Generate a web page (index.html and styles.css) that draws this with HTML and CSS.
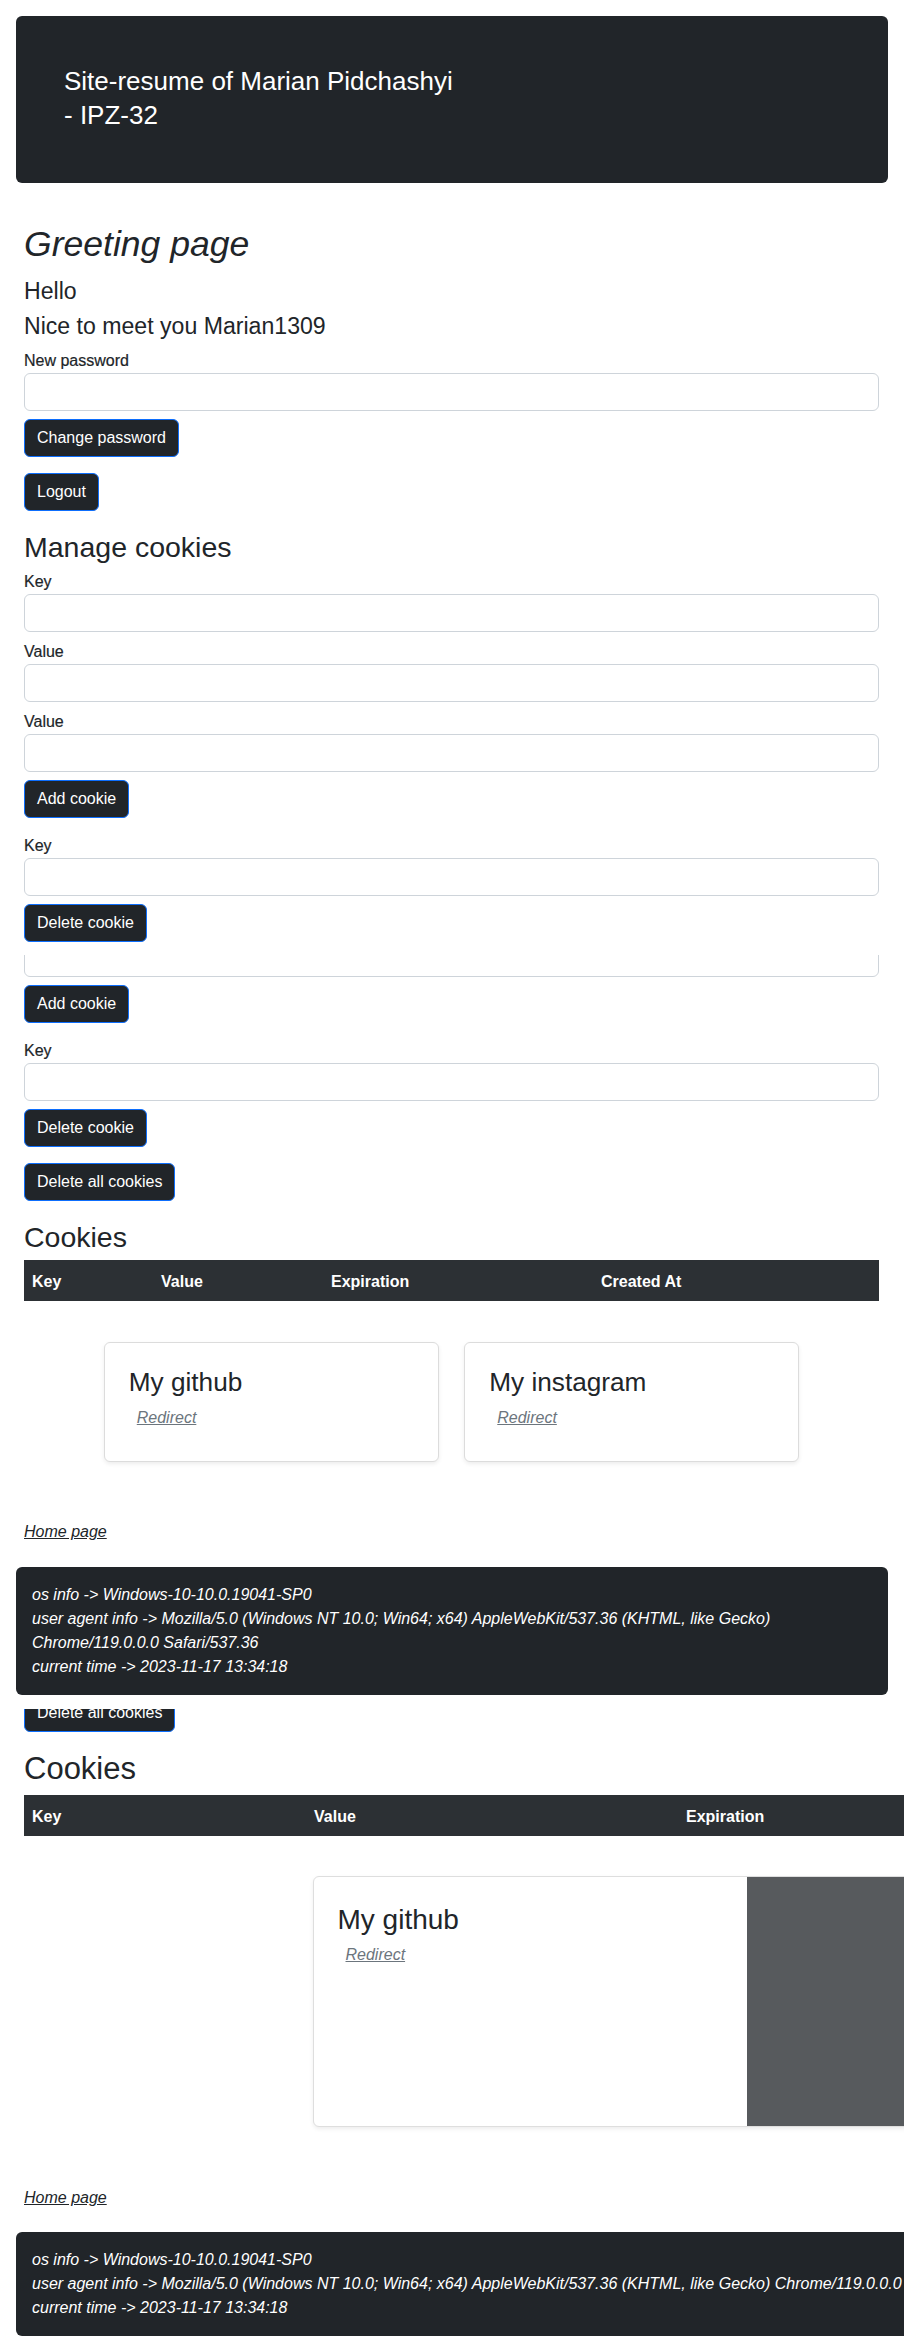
FILE: index.html
```html
<!DOCTYPE html>
<html lang="en">
<head>
<meta charset="utf-8">
<title>Greeting page</title>
<link rel="stylesheet" href="styles.css">
</head>
<body>
<header class="banner">
  <h3 class="banner-title">Site-resume of Marian Pidchashyi - IPZ-32</h3>
</header>

<main class="page">
  <h1 class="page-title">Greeting page</h1>
  <h4 class="greet">Hello</h4>
  <h4 class="greet">Nice to meet you Marian1309</h4>

  <div class="group">
    <label class="field-label">New password</label>
    <input class="field" type="password">
    <button class="btn gap-8">Change password</button>
  </div>
  <button class="btn gap-16">Logout</button>

  <h2 class="section-title">Manage cookies</h2>
  <div class="group">
    <label class="field-label">Key</label>
    <input class="field" type="text">
    <label class="field-label gap-8">Value</label>
    <input class="field" type="text">
    <label class="field-label gap-8">Value</label>
    <input class="field" type="text">
    <button class="btn gap-8">Add cookie</button>
  </div>
  <div class="group">
    <label class="field-label gap-16">Key</label>
    <input class="field" type="text">
    <button class="btn gap-8">Delete cookie</button>
  </div>

  <div class="clip clip-input">
    <input class="field shift-up" type="text">
  </div>
  <button class="btn gap-8">Add cookie</button>
  <div class="group">
    <label class="field-label gap-16">Key</label>
    <input class="field" type="text">
    <button class="btn gap-8">Delete cookie</button>
  </div>
  <button class="btn gap-16">Delete all cookies</button>

  <h2 class="section-title cookies-title">Cookies</h2>
  <table class="cookie-table narrow">
    <thead>
      <tr><th class="c-key">Key</th><th class="c-val">Value</th><th class="c-exp">Expiration</th><th>Created At</th></tr>
    </thead>
  </table>

  <div class="cards">
    <div class="card">
      <h3 class="card-title">My github</h3>
      <a class="card-link" href="#">Redirect</a>
    </div>
    <div class="card">
      <h3 class="card-title">My instagram</h3>
      <a class="card-link" href="#">Redirect</a>
    </div>
  </div>

  <div class="home-row"><a class="home-link" href="#">Home page</a></div>
</main>

<footer class="sysinfo">
  <div>os info -&gt; Windows-10-10.0.19041-SP0</div>
  <div>user agent info -&gt; Mozilla/5.0 (Windows NT 10.0; Win64; x64) AppleWebKit/537.36 (KHTML, like Gecko) Chrome/119.0.0.0 Safari/537.36</div>
  <div>current time -&gt; 2023-11-17 13:34:18</div>
</footer>

<section class="wide-frame">
  <div class="wide">
    <div class="wide-page">
      <div class="clip clip-btn">
        <button class="btn shift-up">Delete all cookies</button>
      </div>
      <h2 class="wide-title">Cookies</h2>
      <table class="cookie-table wide-table">
        <thead>
          <tr><th class="w-key">Key</th><th class="w-val">Value</th><th class="w-exp">Expiration</th><th>Created At</th></tr>
        </thead>
      </table>
      <div class="wide-cards">
        <div class="wide-card">
          <div class="wide-card-body">
            <h3 class="wide-card-title">My github</h3>
            <a class="card-link" href="#">Redirect</a>
          </div>
          <div class="wide-card-media"></div>
        </div>
      </div>
      <div class="home-row wide-home"><a class="home-link" href="#">Home page</a></div>
    </div>
    <footer class="sysinfo wide-info">
      <div>os info -&gt; Windows-10-10.0.19041-SP0</div>
      <div>user agent info -&gt; Mozilla/5.0 (Windows NT 10.0; Win64; x64) AppleWebKit/537.36 (KHTML, like Gecko) Chrome/119.0.0.0 Safari/537.36</div>
      <div>current time -&gt; 2023-11-17 13:34:18</div>
    </footer>
  </div>
</section>
</body>
</html>
```

FILE: styles.css
```css
* { box-sizing: border-box; }

html, body {
  margin: 0;
  padding: 0;
  background: #fff;
}

body {
  font-family: "Liberation Sans", Arial, sans-serif;
  font-size: 16px;
  line-height: 24px;
  color: #212529;
  overflow-x: hidden;
}

/* ---------- banner ---------- */
.banner {
  margin: 16px 16px 0;
  height: 167px;
  padding: 48px;
  background: #212529;
  border-radius: 6px;
  color: #fff;
}
.banner-title {
  margin: 0;
  width: 395px;
  font-size: 26px;
  line-height: 34px;
  font-weight: 400;
}

/* ---------- page ---------- */
.page {
  padding: 0 25px 0 24px;
}
.page-title {
  margin: 40px 0 12px;
  font-size: 35.56px;
  line-height: 42.67px;
  font-weight: 400;
  font-style: italic;
}
.greet {
  margin: 0 0 8px;
  font-size: 23.1px;
  line-height: 27.72px;
  font-weight: 400;
}
.section-title {
  margin: 18.5px 0 6.6px;
  font-size: 28.5px;
  line-height: 34.2px;
  font-weight: 400;
}
.cookies-title {
  margin: 18.3px 0 6.2px;
}

.group { display: block; }

.field-label {
  display: block;
  font-size: 16px;
  line-height: 24px;
  color: #212529;
  -webkit-text-stroke: 0.2px #212529;
}
.field {
  display: block;
  width: 100%;
  height: 38px;
  margin: 0;
  padding: 6px 12px;
  border: 1px solid #ced4da;
  border-radius: 6px;
  background: #fff;
  font: inherit;
}

.btn {
  display: block;
  width: max-content;
  height: 38px;
  margin: 0;
  padding: 0 12px;
  background: #212529;
  color: #fff;
  border: 1px solid #0d6efd;
  border-radius: 6px;
  font-family: "Liberation Sans", Arial, sans-serif;
  font-size: 16px;
  line-height: 24px;
}

.gap-8 { margin-top: 8px; }
.gap-16 { margin-top: 16px; }

.clip {
  overflow: hidden;
}
.clip-input {
  margin-top: 12.5px;
  height: 22.4px;
}
.shift-up {
  margin-top: -15.6px;
}

/* ---------- table ---------- */
.cookie-table {
  width: 100%;
  border-collapse: collapse;
  table-layout: fixed;
}
.cookie-table th {
  height: 41px;
  padding: 10px 8px 7px;
  background: #2c3034;
  color: #fff;
  text-align: left;
  font-weight: 700;
  font-size: 16px;
  line-height: 24px;
}
.c-key { width: 129px; }
.c-val { width: 170px; }
.c-exp { width: 270px; }

/* ---------- cards ---------- */
.cards {
  margin-top: 40.7px;
  display: flex;
  justify-content: center;
  gap: 25.5px;
}
.card {
  width: 335px;
  height: 120.6px;
  padding: 24px;
  border: 1px solid #dcdcdc;
  border-radius: 6px;
  background: #fff;
  box-shadow: 0 2px 4px rgba(0, 0, 0, 0.075);
}
.card-title {
  margin: 0 0 8px;
  font-size: 26.2px;
  line-height: 31.4px;
  font-weight: 400;
}
.card-link {
  display: inline-block;
  margin-left: 8px;
  color: #6c757d;
  font-style: italic;
  text-decoration: underline;
}

.home-row {
  margin-top: 57.5px;
  line-height: 24px;
}
.home-link {
  color: #212529;
  font-style: italic;
  text-decoration: underline;
}

/* ---------- system info ---------- */
.sysinfo {
  margin: 22.9px 16px 0;
  padding: 16px;
  background: #212529;
  border-radius: 6px;
  color: #fff;
  font-style: italic;
  font-size: 16px;
  line-height: 24px;
}

/* ---------- second (wider) capture ---------- */
.wide-frame {
  width: 904px;
  overflow: hidden;
}
.wide {
  width: 1425px;
}
.wide-page {
  padding: 0 24px;
}
.clip-btn {
  margin-top: 14.6px;
  height: 22.4px;
}
.wide-title {
  margin: 18.3px 0 7.8px;
  font-size: 31px;
  line-height: 37.2px;
  font-weight: 400;
}
.wide-table th {
  height: 40.7px;
}
.w-key { width: 282px; }
.w-val { width: 372px; }
.w-exp { width: 350px; }

.wide-cards {
  margin-top: 40.3px;
  display: flex;
  justify-content: center;
}
.wide-card {
  width: 800px;
  height: 250.7px;
  display: flex;
  border: 1px solid #dedede;
  border-radius: 6px;
  overflow: hidden;
  background: #fff;
  box-shadow: 0 2px 4px rgba(0, 0, 0, 0.075);
}
.wide-card-body {
  width: 433.5px;
  padding: 25.8px 24px 24px;
}
.wide-card-title {
  margin: 0 0 6px;
  font-size: 28px;
  line-height: 33.6px;
  font-weight: 400;
}
.wide-card-media {
  flex: 1;
  background: #575a5d;
}
.wide-home {
  margin-top: 58.8px;
}
.wide-info {
  margin-top: 22.2px;
}
```
